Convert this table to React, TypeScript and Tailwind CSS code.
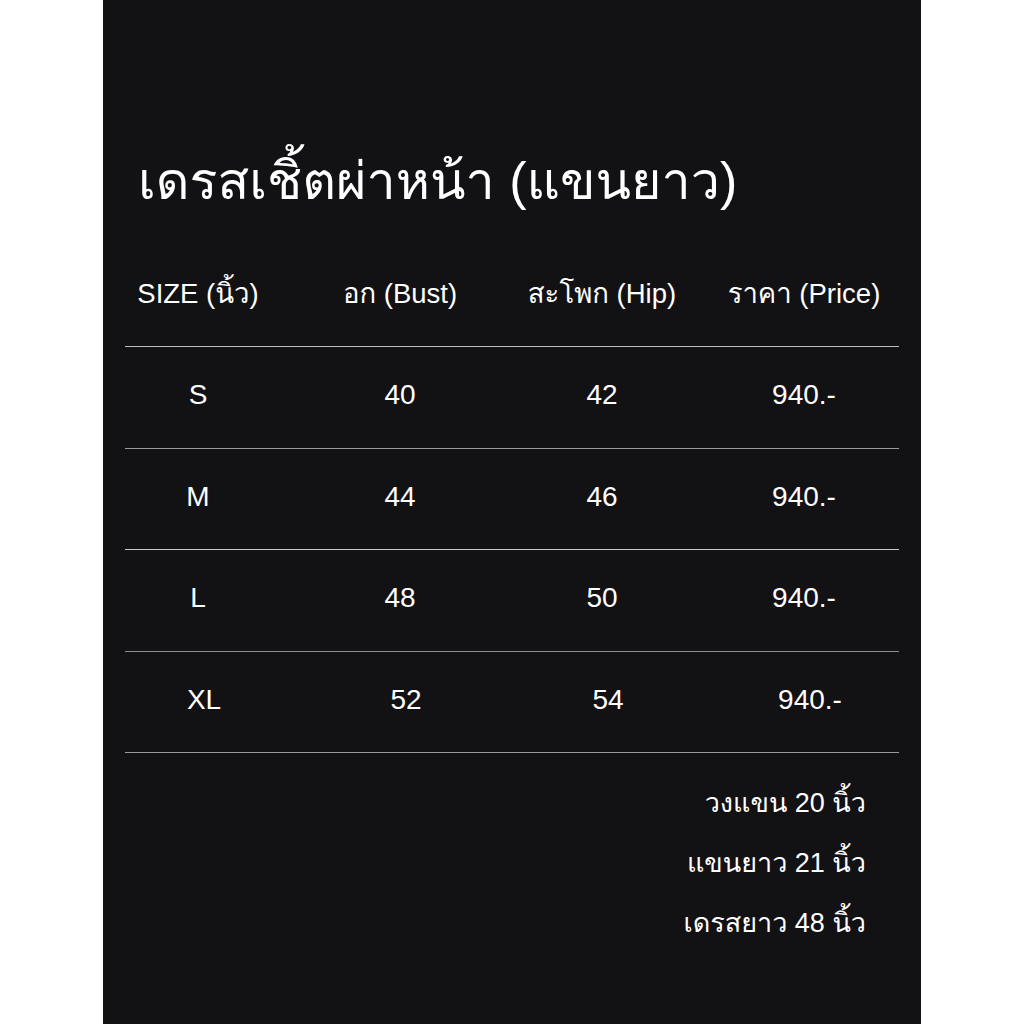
import React from "react";

const font = { fontFamily: '"Liberation Sans", Loma, Garuda, Umpush, "Noto Sans Thai Looped", "Noto Sans Thai", sans-serif' };

const headers = ["SIZE (นิ้ว)", "อก (Bust)", "สะโพก (Hip)", "ราคา (Price)"];
const rows = [
  { cells: ["S", "40", "42", "940.-"], line: "border-[#9a999b]", shift: false },
  { cells: ["M", "44", "46", "940.-"], line: "border-[#c9c8ca]", shift: false },
  { cells: ["L", "48", "50", "940.-"], line: "border-[#8c8b8d]", shift: false },
  { cells: ["XL", "52", "54", "940.-"], line: "border-[#9a999b]", shift: true },
];

export default function App() {
  return (
    <div className="w-full h-[1024px] bg-white flex justify-center" style={font}>
      <div className="w-[818px] h-[1024px] bg-[#121114] text-white flex flex-col">
        <div className="pt-[149px] pl-[35px] text-[52px] leading-[64px] h-[213px] whitespace-nowrap">
          เดรสเชิ้ตผ่าหน้า (แขนยาว)
        </div>
        <div className="mt-[60px] h-[40px] grid grid-cols-[repeat(4,202px)] ml-[-6px] items-center text-[27.5px]">
          {headers.map((h) => (
            <div key={h} className="flex justify-center whitespace-nowrap">
              {h}
            </div>
          ))}
        </div>
        <div className="mt-[33px] mx-[22px] border-t border-[#bdbcbe]" />
        {rows.map((r, i) => (
          <div key={i} className="flex flex-col">
            <div
              className={
                "h-[100.5px] pb-[4px] grid grid-cols-[repeat(4,202px)] items-center text-[28px] " +
                (r.shift ? "ml-[0px]" : "ml-[-6px]")
              }
            >
              {r.cells.map((c, j) => (
                <div key={j} className="flex justify-center whitespace-nowrap">
                  {c}
                </div>
              ))}
            </div>
            <div className={"mx-[22px] border-t " + r.line} />
          </div>
        ))}
        <div className="mt-[20px] pr-[55px] flex flex-col items-end text-[27px] leading-[60px]">
          <div>วงแขน 20 นิ้ว</div>
          <div>แขนยาว 21 นิ้ว</div>
          <div>เดรสยาว 48 นิ้ว</div>
        </div>
      </div>
    </div>
  );
}
